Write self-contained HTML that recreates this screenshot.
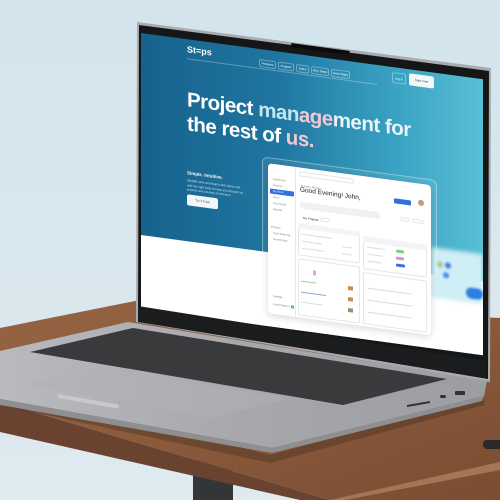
<!DOCTYPE html>
<html><head><meta charset="utf-8"><style>
*{margin:0;padding:0;box-sizing:border-box}
body{width:500px;height:500px;overflow:hidden;background:#d6e6ee;font-family:"Liberation Sans",sans-serif;position:relative}
.abs{position:absolute}
#screen{position:absolute;left:141px;top:33px;width:342px;height:276px;transform-origin:0 0;transform:skewY(7.7deg);overflow:hidden;background:linear-gradient(90deg,#16628d 0%,#1f76a0 40%,#3aa3c3 75%,#58bfd6 100%)}
#screen .t{position:absolute;color:#fff;white-space:nowrap}
.pill{position:absolute;top:10px;height:8px;border:0.5px solid rgba(255,255,255,.35);border-radius:2px;font-size:3px;color:#fff;line-height:7px;text-align:center}
.card{position:absolute;left:127px;top:113px;width:163px;height:150px;background:#fff;border-radius:4px;box-shadow:0 2px 8px rgba(0,0,0,.15);overflow:hidden}
.card .s{position:absolute;font-size:2.6px;color:#777;white-space:nowrap}
.ln{position:absolute;height:1.2px;background:#d8dde2}
.box{position:absolute;border:0.5px solid #e3e6ea;border-radius:2px}
</style></head><body>
<svg class="abs" style="left:0;top:0" width="500" height="500">
<defs>
<linearGradient id="bg" x1="0" y1="0" x2="0" y2="1"><stop offset="0" stop-color="#d3e4ec"/><stop offset="1" stop-color="#dfeaef"/></linearGradient>
<linearGradient id="wood" x1="0" y1="0" x2="1" y2="1"><stop offset="0" stop-color="#946444"/><stop offset=".5" stop-color="#8a5a3b"/><stop offset="1" stop-color="#7a4d32"/></linearGradient>
<linearGradient id="base" x1="0" y1="0" x2="1" y2="0"><stop offset="0" stop-color="#b9babd"/><stop offset=".5" stop-color="#a7a8ac"/><stop offset="1" stop-color="#9c9da1"/></linearGradient>
</defs>
<rect width="500" height="500" fill="url(#bg)"/>
<rect x="193" y="460" width="40" height="40" fill="#333536"/>
<polygon points="0,328 140,300 500,318 500,500 330,500 0,402" fill="url(#wood)"/>
<polygon points="0,402 330,500 300,500 0,432" fill="#6a4330"/>
<polygon points="330,500 500,462 500,470 345,500" fill="#a57656"/>
<rect x="483" y="440" width="20" height="9" rx="4" fill="#2a2a2c"/>
<polygon points="137,22 491,68 490,382 136,322" fill="#a9abae"/>
<polygon points="139,25 489,71 488,379 138,320" fill="#151618"/>
<polygon points="291,43 350,51 348,55 292,47" fill="#0b0b0c"/>
</svg>
<div id="screen">
  <div class="t" style="left:46px;top:5px;font-size:9px;font-weight:bold">St=ps</div>
  <div class="abs" style="left:46px;top:19px;width:190px;height:.5px;background:rgba(255,255,255,.3)"></div>
  <div class="pill" style="left:118px;width:17px">Features</div>
  <div class="pill" style="left:137px;width:16px">Projects</div>
  <div class="pill" style="left:155px;width:13px">Tasks</div>
  <div class="pill" style="left:170px;width:18px">Why Steps</div>
  <div class="pill" style="left:190px;width:19px">Next Steps</div>
  <div class="pill" style="left:251px;top:5px;width:14px;height:11px;line-height:10px">Log In</div>
  <div class="abs" style="left:268px;top:4px;width:25px;height:12px;background:#f4f7f9;border-radius:2px;font-size:3px;line-height:12px;text-align:center;color:#444">Start Free</div>
  <div class="t" style="left:46px;top:49px;font-size:20.5px;font-weight:bold;line-height:24px;letter-spacing:-.5px">Project <span style="color:#c3e8f3">man</span><span style="color:#f3c6d6">age</span><span style="color:#eaf4f7">ment for</span><br>the rest of <span style="color:#f2c8d7">us.</span></div>
  <div class="t" style="left:46px;top:131px;font-size:4.5px;font-weight:bold">Simple. Intuitive.</div>
  <div class="t" style="left:46px;top:139px;font-size:3px;line-height:4.5px;opacity:.8">Simplify work and teams with clarity and<br>with the right tools to keep you focused on<br>projects and creating momentum.</div>
  <div class="abs" style="left:46px;top:155px;width:31px;height:11px;background:#f4f7f9;border-radius:2px;font-size:3.2px;line-height:11px;text-align:center;color:#1b5d84">Try It Free</div>
  <div class="abs" style="left:0;top:202px;width:342px;height:80px;background:#fff"></div>
  <div class="abs" style="left:290px;top:175px;width:52px;height:50px;background:#cfeef5;filter:blur(2px)"></div>
  <div class="abs" style="left:296px;top:188px;width:6px;height:6px;border-radius:50%;background:#a9c98a;filter:blur(1px)"></div>
  <div class="abs" style="left:304px;top:188px;width:6px;height:6px;border-radius:50%;background:#3b82e0;filter:blur(1px)"></div>
  <div class="abs" style="left:302px;top:198px;width:6px;height:6px;border-radius:50%;background:#4b8ee6;filter:blur(1px)"></div>
  <div class="abs" style="left:325px;top:210px;width:17px;height:11px;border-radius:6px;background:#2b7fe0;filter:blur(1px)"></div>
  <div class="abs" style="left:121px;top:107px;width:175px;height:162px;border:1px solid rgba(255,255,255,.35);border-radius:6px;background:rgba(255,255,255,.08)"></div>
  <div class="card">
    <div class="abs" style="left:27px;top:0;width:.5px;height:150px;background:#e6e8eb"></div>
    <div class="s" style="left:5px;top:14px">Dashboard</div>
    <div class="s" style="left:5px;top:20px">Projects</div>
    <div class="abs" style="left:2px;top:25px;width:24px;height:5px;background:#2f6fe0;border-radius:1px"></div>
    <div class="s" style="left:5px;top:26px;color:#fff">My Work</div>
    <div class="s" style="left:5px;top:32px">Inbox</div>
    <div class="s" style="left:5px;top:38px">Documents</div>
    <div class="s" style="left:5px;top:44px">Reports</div>
    <div class="s" style="left:3px;top:62px">Projects</div>
    <div class="s" style="left:5px;top:68px">Team Planning</div>
    <div class="s" style="left:5px;top:74px">Growth Plan</div>
    <div class="s" style="left:5px;top:131px">Settings</div>
    <div class="s" style="left:5px;top:139px">Log &amp; Support</div>
    <div class="abs" style="left:23px;top:139px;width:3px;height:3px;background:#5bc466"></div>
    <div class="box" style="left:31px;top:4px;width:55px;height:5px"></div>
    <div class="s" style="left:33px;top:17px">Monday, 4th Nov</div>
    <div class="abs" style="left:32px;top:19px;font-size:6.5px;color:#222;white-space:nowrap">Good Evening! John,</div>
    <div class="abs" style="left:126px;top:18px;width:17px;height:5px;background:#2f6fe0;border-radius:1px"></div>
    <div class="abs" style="left:150px;top:16px;width:6px;height:6px;border-radius:50%;background:#c59a75"></div>
    <div class="abs" style="left:32px;top:34px;width:80px;height:7px;background:#f0f1f3;border-radius:3px"></div>
    <div class="box" style="left:132px;top:36px;width:10px;height:4px"></div>
    <div class="box" style="left:144px;top:36px;width:12px;height:4px"></div>
    <div class="abs" style="left:35px;top:48px;font-size:3px;color:#333">My Projects</div>
    <div class="box" style="left:52px;top:47px;width:10px;height:4px"></div>
    <div class="box" style="left:30px;top:56px;width:62px;height:32px"></div>
    <div class="abs" style="left:30px;top:56px;width:62px;height:5px;background:#f3f4f6"></div>
    <div class="ln" style="left:34px;top:66px;width:30px"></div>
    <div class="ln" style="left:34px;top:73px;width:20px"></div><div class="ln" style="left:74px;top:73px;width:10px"></div>
    <div class="ln" style="left:34px;top:80px;width:22px"></div><div class="ln" style="left:74px;top:80px;width:10px"></div>
    <div class="box" style="left:95px;top:60px;width:64px;height:33px"></div>
    <div class="abs" style="left:95px;top:60px;width:64px;height:6px;background:#f3f4f6"></div>
    <div class="ln" style="left:99px;top:70px;width:18px"></div><div class="abs" style="left:128px;top:69px;width:8px;height:3px;background:#7bd37f;border-radius:1px"></div>
    <div class="ln" style="left:99px;top:77px;width:16px"></div><div class="abs" style="left:128px;top:76px;width:8px;height:3px;background:#e08ce0;border-radius:1px"></div>
    <div class="ln" style="left:99px;top:84px;width:15px"></div><div class="abs" style="left:128px;top:83px;width:9px;height:3px;background:#3f6fe0;border-radius:1px"></div>
    <div class="box" style="left:30px;top:91px;width:62px;height:57px"></div>
    <div class="abs" style="left:45px;top:101px;width:3px;height:5px;background:#e6a3e6"></div>
    <div class="ln" style="left:33px;top:113px;width:15px;background:#9ad39b"></div>
    <div class="ln" style="left:33px;top:124px;width:25px;background:#8aa8e0"></div>
    <div class="ln" style="left:33px;top:134px;width:22px"></div>
    <div class="abs" style="left:80px;top:112px;width:5px;height:4px;background:#c98c50"></div>
    <div class="abs" style="left:80px;top:123px;width:5px;height:4px;background:#c98c50"></div>
    <div class="abs" style="left:80px;top:134px;width:5px;height:4px;background:#8a9a70"></div>
    <div class="box" style="left:95px;top:96px;width:64px;height:52px"></div>
    <div class="ln" style="left:99px;top:111px;width:45px"></div>
    <div class="ln" style="left:99px;top:123px;width:45px"></div>
    <div class="ln" style="left:99px;top:135px;width:45px"></div>
  </div>
</div>
<svg class="abs" style="left:0;top:0" width="500" height="500">
<polygon points="138,306 486,361 486,378 138,322" fill="#1b1c1e"/>
<polygon points="0,385 270,455 484,398 484,405 270,463 0,405" fill="rgba(60,40,30,.35)"/>
<polygon points="128,322 487,381 484,396 272,448 0,399 0,351" fill="url(#base)"/>
<polygon points="0,399 272,448 484,396 482,401 272,453 0,405" fill="#8e8f93"/>
<polygon points="133,328 447,379 343,405 30,352" fill="#3a3a3d"/>
<polygon points="25,384 100,367 290,398 210,418" fill="#b1b2b5" opacity=".5"/>
<rect x="58" y="394" width="62" height="4" rx="2" fill="#c8c9cc" transform="rotate(10 58 394)"/>
<polygon points="407,405 430,401 430,403 407,407" fill="#333"/>
<rect x="440" y="395" width="6" height="3" rx="1.5" fill="#333"/>
<rect x="455" y="391" width="10" height="4" rx="1" fill="#333"/>
</svg>
</body></html>
